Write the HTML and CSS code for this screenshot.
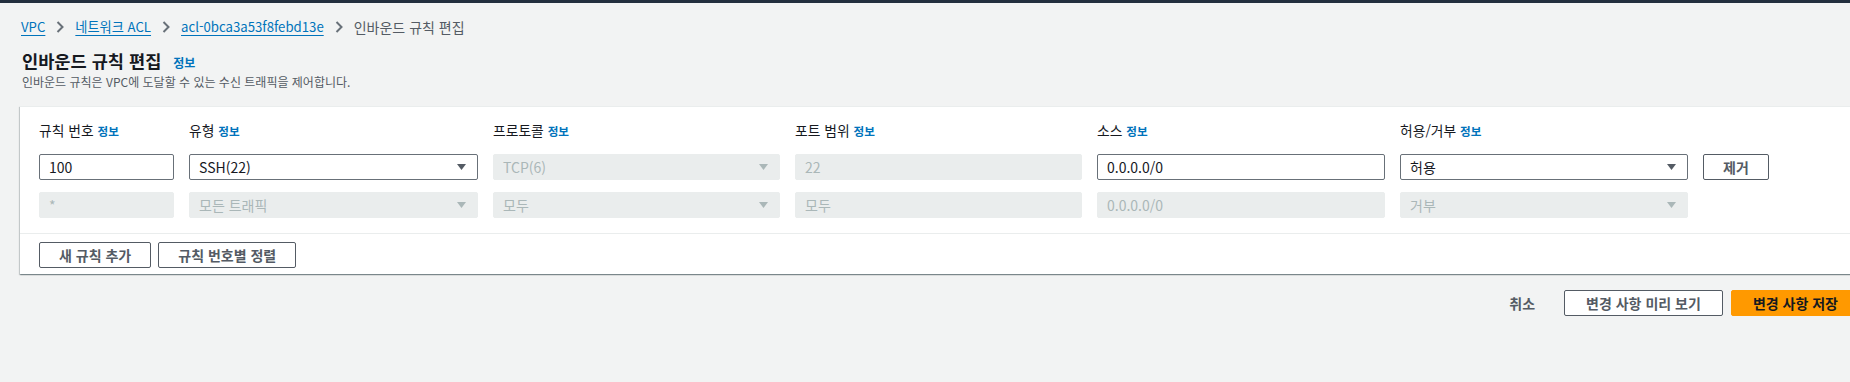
FILE: index.html
```html
<!DOCTYPE html>
<html lang="ko">
<head>
<meta charset="utf-8">
<title>인바운드 규칙 편집</title>
<link rel="stylesheet" href="styles.css">
</head>
<body>
<div class="topbar"></div>
<div class="page">
  <nav class="breadcrumbs">
    <a class="crumb-link" href="#">VPC</a>
    <svg class="chev" width="8" height="12" viewBox="0 0 8 12"><polyline points="1.5,1 6.5,6 1.5,11" fill="none" stroke="#687078" stroke-width="2"/></svg>
    <a class="crumb-link" href="#">네트워크 ACL</a>
    <svg class="chev" width="8" height="12" viewBox="0 0 8 12"><polyline points="1.5,1 6.5,6 1.5,11" fill="none" stroke="#687078" stroke-width="2"/></svg>
    <a class="crumb-link" href="#">acl-0bca3a53f8febd13e</a>
    <svg class="chev" width="8" height="12" viewBox="0 0 8 12"><polyline points="1.5,1 6.5,6 1.5,11" fill="none" stroke="#687078" stroke-width="2"/></svg>
    <span class="crumb-current">인바운드 규칙 편집</span>
  </nav>

  <header class="page-header">
    <h1 class="title">인바운드 규칙 편집 <a class="info info-title" href="#">정보</a></h1>
    <p class="subtitle">인바운드 규칙은 VPC에 도달할 수 있는 수신 트래픽을 제어합니다.</p>
  </header>

  <section class="card">
    <div class="rules">
      <div class="label">규칙 번호 <a class="info" href="#">정보</a></div>
      <div class="label">유형 <a class="info" href="#">정보</a></div>
      <div class="label">프로토콜 <a class="info" href="#">정보</a></div>
      <div class="label">포트 범위 <a class="info" href="#">정보</a></div>
      <div class="label">소스 <a class="info" href="#">정보</a></div>
      <div class="label">허용/거부 <a class="info" href="#">정보</a></div>
      <div></div>

      <div class="field">100</div>
      <div class="field select">SSH(22)<svg class="caret" width="9" height="6" viewBox="0 0 9 6"><polygon points="0,0 9,0 4.5,6"/></svg></div>
      <div class="field disabled select">TCP(6)<svg class="caret" width="9" height="6" viewBox="0 0 9 6"><polygon points="0,0 9,0 4.5,6"/></svg></div>
      <div class="field disabled">22</div>
      <div class="field">0.0.0.0/0</div>
      <div class="field select">허용<svg class="caret" width="9" height="6" viewBox="0 0 9 6"><polygon points="0,0 9,0 4.5,6"/></svg></div>
      <div class="btn btn-remove">제거</div>

      <div class="field disabled">*</div>
      <div class="field disabled select">모든 트래픽<svg class="caret" width="9" height="6" viewBox="0 0 9 6"><polygon points="0,0 9,0 4.5,6"/></svg></div>
      <div class="field disabled select">모두<svg class="caret" width="9" height="6" viewBox="0 0 9 6"><polygon points="0,0 9,0 4.5,6"/></svg></div>
      <div class="field disabled">모두</div>
      <div class="field disabled">0.0.0.0/0</div>
      <div class="field disabled select">거부<svg class="caret" width="9" height="6" viewBox="0 0 9 6"><polygon points="0,0 9,0 4.5,6"/></svg></div>
      <div></div>
    </div>
    <div class="card-footer">
      <div class="btn">새 규칙 추가</div>
      <div class="btn">규칙 번호별 정렬</div>
    </div>
  </section>

  <div class="actions">
    <div class="btn btn-link">취소</div>
    <div class="btn btn-wide">변경 사항 미리 보기</div>
    <div class="btn btn-wide btn-primary">변경 사항 저장</div>
  </div>
</div>
</body>
</html>
```
FILE: styles.css
```css
html, body {
  margin: 0;
  padding: 0;
  overflow: hidden;
}
body {
  background: #f2f3f3;
  font-family: "Noto Sans CJK KR", sans-serif;
  color: #16191f;
  font-size: 14px;
}
.topbar {
  height: 3px;
  background: #232f3e;
}
.page {
  width: 1860px;
  box-sizing: border-box;
  padding-left: 20px;
}
.breadcrumbs {
  display: flex;
  align-items: center;
  height: 20px;
  margin-top: 14px;
  padding-left: 1px;
  font-size: 14px;
  line-height: 20px;
}
.crumb-link {
  color: #0073bb;
  font-size: 13.2px;
  text-decoration: underline;
  text-underline-offset: 3px;
}
.chev {
  margin: 0 11px;
}
.crumb-current {
  color: #545b64;
}
.page-header {
  padding-left: 2px;
}
.title {
  margin: 13px 0 0;
  font-size: 17.6px;
  line-height: 22px;
  font-weight: 700;
  color: #16191f;
}
.info {
  color: #0073bb;
  font-size: 11.6px;
  font-weight: 700;
  text-decoration: none;
}
.info-title {
  font-size: 12px;
  margin-left: 7px;
}
.subtitle {
  margin: 0;
  font-size: 12px;
  line-height: 16px;
  color: #545b64;
}
.card {
  margin-top: 16px;
  background: #fff;
  border-top: 1px solid #eaeded;
  box-shadow: 0 1px 1px 0 rgba(0, 28, 36, 0.3), 1px 1px 1px 0 rgba(0, 28, 36, 0.15), -1px 1px 1px 0 rgba(0, 28, 36, 0.15);
}
.rules {
  display: grid;
  grid-template-columns: 135px 289px 287px 287px 288px 288px 66px;
  column-gap: 15px;
  row-gap: 12px;
  padding: 15px 0 15px 19px;
  border-bottom: 1px solid #eaeded;
}
.label {
  font-size: 13.8px;
  line-height: 16px;
  margin-bottom: 3px;
  color: #16191f;
}
.field {
  height: 26px;
  box-sizing: border-box;
  border: 1px solid #687078;
  border-radius: 2px;
  padding: 0 9px;
  line-height: 24px;
  font-size: 14px;
  color: #16191f;
  background: #fff;
  display: flex;
  align-items: center;
  justify-content: space-between;
}
.field .caret {
  fill: #545b64;
  margin-right: 2px;
}
.field.disabled {
  background: #eaeded;
  border-color: #eaeded;
  color: #aab7b8;
}
.field.disabled .caret {
  fill: #aab7b8;
}
.btn {
  height: 26px;
  box-sizing: border-box;
  border: 1px solid #545b64;
  border-radius: 2px;
  padding: 0 19px;
  background: #fff;
  color: #545b64;
  font-size: 14px;
  font-weight: 700;
  line-height: 24px;
  display: flex;
  align-items: center;
  justify-content: center;
  white-space: nowrap;
}
.btn-wide {
  padding: 0 21px;
}
.card-footer {
  display: flex;
  gap: 7px;
  padding: 8px 0 6px 19px;
}
.actions {
  display: flex;
  justify-content: flex-end;
  align-items: center;
  gap: 8px;
  margin-top: 16px;
}
.btn-link {
  border-color: transparent;
  background: transparent;
  padding: 0 20px;
}
.btn-primary {
  background: #ff9900;
  border-color: #ff9900;
  color: #16191f;
}
```
